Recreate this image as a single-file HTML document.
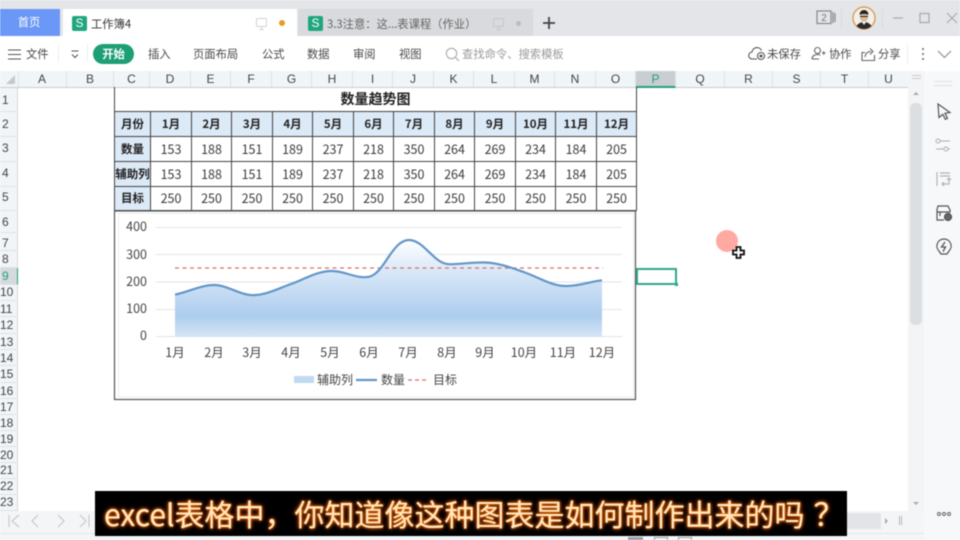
<!DOCTYPE html>
<html lang="zh"><head><meta charset="utf-8"><title>工作簿4</title>
<style>
html,body{margin:0;padding:0;background:#fff}
#p{position:relative;width:960px;height:540px;overflow:hidden;background:#fff;font-family:"Liberation Sans","Noto Sans CJK SC",sans-serif;color:#444;filter:blur(.4px)}
.a{position:absolute}
.t{position:absolute;white-space:nowrap;font-size:11.3px;line-height:16px;font-family:"Noto Sans CJK SC",sans-serif;color:#4a4a4a}
.ch{position:absolute;top:71px;height:16px;line-height:16px;text-align:center;font-size:12px;color:#444;border-right:1px solid #dfe3e6;box-sizing:border-box}
.rh{position:absolute;left:0;width:18px;text-align:left;padding-left:2px;box-sizing:border-box;font-size:12px;color:#444;border-bottom:1px solid #dfe3e6;border-right:1px solid #d5d8db;background:#f1f5f8}
table{position:absolute;left:114px;top:87px;border-collapse:collapse;table-layout:fixed;width:522px;font-family:"Noto Sans CJK SC",sans-serif}
td{border:1px solid #444;padding:0;text-align:center;font-size:12.5px;color:#3a3a3a;overflow:hidden;white-space:nowrap;line-height:14px}
td.h{background:#dce9f7;font-weight:700;font-size:11.5px;color:#222}
#sub{position:absolute;left:95px;top:491px;width:752px;height:45px;background:#000}
#sub>span{position:absolute;left:9px;top:1px;white-space:nowrap;font:400 30px/42px "Noto Sans CJK SC",sans-serif;color:#ffe9c4;text-shadow:0 0 1.500px #ff8a1a,0 0 3px #f06a00,0 0 5px #d84a00}
#sub i{font-style:normal;position:relative;left:9px;font-size:31px}
</style></head><body><div id="p">

<!-- tab bar -->
<div class="a" style="left:0;top:0;width:960px;height:36px;background:#e3e5e8"></div>
<div class="a" style="left:0;top:9px;width:60px;height:27px;background:#6b98f7;color:#fff;font:11.3px/27px 'Noto Sans CJK SC',sans-serif;text-align:center;padding-right:2px;box-sizing:border-box">首页</div>
<div class="a" style="left:63px;top:9px;width:234px;height:27px;background:#fff"></div>
<div class="a" style="left:298px;top:9px;width:235px;height:27px;background:#d9dadd"></div>
<div class="a" style="left:72px;top:16px;width:15px;height:15px;background:#1fa67d;border-radius:2px;color:#fff;font:400 12px/15px 'Liberation Sans',sans-serif;text-align:center">S</div>
<div class="t" style="left:91px;top:16px;color:#333">工作簿4</div>
<svg class="a" style="left:255px;top:17px" width="14" height="14" viewBox="0 0 14 14" fill="none" stroke="#d2d4d6"><rect x="1.5" y="1.5" width="10" height="8" rx="1"/><path d="M6.5 9.5v3M4 12.5h5"/></svg>
<div class="a" style="left:279px;top:20px;width:6px;height:6px;border-radius:50%;background:#ec9b1e"></div>
<div class="a" style="left:308px;top:16px;width:15px;height:15px;background:#1fa67d;border-radius:2px;color:#fff;font:400 12px/15px 'Liberation Sans',sans-serif;text-align:center">S</div>
<div class="t" style="left:327px;top:16px;color:#666">3.3注意：这...表课程（作业）</div>
<svg class="a" style="left:492px;top:17px" width="14" height="14" viewBox="0 0 14 14" fill="none" stroke="#c6c8ca"><rect x="1.5" y="1.5" width="10" height="8" rx="1"/><path d="M6.5 9.5v3M4 12.5h5"/></svg>
<div class="a" style="left:516px;top:21px;width:5px;height:5px;border-radius:50%;background:#bbbdc0"></div>
<svg class="a" style="left:543px;top:17px" width="12" height="12" viewBox="0 0 12 12" stroke="#444" stroke-width="1.800"><path d="M6 0v12M0 6h12"/></svg>

<svg class="a" style="left:816px;top:10px" width="22" height="15" viewBox="0 0 22 15" fill="none" stroke="#888" stroke-width="1.200"><rect x="1" y="1" width="14" height="12.5"/><path d="M17 2v11M19 3v9"/><text x="8" y="11" font-size="10" text-anchor="middle" fill="#777" stroke="none" font-family="Liberation Sans">2</text></svg>
<svg class="a" style="left:852px;top:6px" width="24" height="24" viewBox="0 0 24 24"><circle cx="12" cy="12" r="11" fill="#f4f0ea" stroke="#d6a35c" stroke-width="1.500"/><path d="M4.500 20c2-3 5-4 7.500-4s5.500 1 7.500 4a11 11 0 0 1-15 0z" fill="#2b2b2b"/><path d="M10 16l2 3 2-3z" fill="#fff"/><ellipse cx="12" cy="11" rx="4" ry="5" fill="#e0b99a"/><path d="M7.500 9c0-3.500 2.500-5 4.500-5s4.500 1.500 4.500 5c-2-1.500-7-1.500-9 0z" fill="#222"/><path d="M8 10.500h8" stroke="#222"/></svg>
<div class="a" style="left:841px;top:8px;width:1px;height:20px;background:#d8dadd"></div>
<div class="a" style="left:882px;top:8px;width:1px;height:20px;background:#d8dadd"></div>
<svg class="a" style="left:892px;top:10px" width="68" height="16" viewBox="0 0 68 16" fill="none" stroke="#a9acb0" stroke-width="1.200"><path d="M1 8h10"/><rect x="28" y="3.500" width="9" height="9" stroke-width="1.300"/><path d="M55 3l10 10M65 3L55 13"/></svg>

<!-- toolbar -->
<div class="a" style="left:0;top:36px;width:960px;height:35px;background:#fff"></div>
<svg class="a" style="left:8px;top:49px" width="13" height="11" viewBox="0 0 13 11" stroke="#555" stroke-width="1.100"><path d="M0 1h13M0 5.500h13M0 10h13"/></svg>
<div class="t" style="left:26px;top:46px">文件</div>
<div class="a" style="left:58px;top:44px;width:1px;height:18px;background:#eceef0"></div>
<svg class="a" style="left:71px;top:50px" width="8" height="9" viewBox="0 0 8 9" fill="none" stroke="#555" stroke-width="1.100"><path d="M.5 1h7M1 4.500l3 3 3-3"/></svg>
<div class="a" style="left:87px;top:44px;width:1px;height:18px;background:#eceef0"></div>
<div class="a" style="left:93px;top:44px;width:41px;height:20px;border-radius:10px;background:#1d9f76;color:#fff;font:700 11.3px/20px 'Noto Sans CJK SC',sans-serif;text-align:center">开始</div>
<div class="t" style="left:148px;top:46px">插入</div>
<div class="t" style="left:193px;top:46px">页面布局</div>
<div class="t" style="left:262px;top:46px">公式</div>
<div class="t" style="left:307px;top:46px">数据</div>
<div class="t" style="left:353px;top:46px">审阅</div>
<div class="t" style="left:399px;top:46px">视图</div>
<svg class="a" style="left:445px;top:47px" width="15" height="15" viewBox="0 0 15 15" fill="none" stroke="#aaa" stroke-width="1.100"><circle cx="6.500" cy="6.500" r="5.200"/><path d="M10.500 10.500l3.500 3.500"/></svg>
<div class="t" style="left:462px;top:46px;color:#9a9a9a">查找命令、搜索模板</div>

<svg class="a" style="left:748px;top:46px" width="18" height="15" viewBox="0 0 18 15" fill="none" stroke="#555" stroke-width="1.100"><path d="M9 13H4.500a3.500 3.500 0 0 1-.5-7 5 5 0 0 1 9.500-1.500"/><circle cx="13" cy="10" r="3.500"/><circle cx="13" cy="10" r="1" fill="#555"/></svg>
<div class="t" style="left:767px;top:46px">未保存</div>
<svg class="a" style="left:811px;top:46px" width="15" height="15" viewBox="0 0 15 15" fill="none" stroke="#666" stroke-width="1.100"><circle cx="6.500" cy="4.500" r="3"/><path d="M1 13c0-3 2.500-4.500 5.500-4.500 1 0 2 .2 2.800.6M1 13h7M11 7h3.500M12.700 5.300v3.400"/></svg>
<div class="t" style="left:829px;top:46px">协作</div>
<svg class="a" style="left:861px;top:47px" width="15" height="14" viewBox="0 0 15 14" fill="none" stroke="#666" stroke-width="1.100"><path d="M4 5.500H1v8h12.500V8"/><path d="M4 10c.5-4 3-5.500 6-5.500M9 1.500l3 3-3 3"/></svg>
<div class="t" style="left:878px;top:46px">分享</div>
<div class="a" style="left:907px;top:44px;width:1px;height:20px;background:#eceef0"></div>
<svg class="a" style="left:921px;top:47px" width="4" height="14" viewBox="0 0 4 14" fill="#666"><circle cx="2" cy="2" r="1"/><circle cx="2" cy="7" r="1"/><circle cx="2" cy="12" r="1"/></svg>
<svg class="a" style="left:937px;top:50px" width="15" height="9" viewBox="0 0 15 9" fill="none" stroke="#888" stroke-width="1.100"><path d="M1 1l6.500 6.500L14 1"/></svg>

<!-- column headers -->
<div class="a" style="left:0;top:71px;width:908px;height:16px;background:#f0f5f8;border-bottom:1px solid #c9cdd0;box-sizing:content-box"></div>
<div class="a" style="left:6px;top:75px;width:0;height:0;border-left:9px solid transparent;border-bottom:9px solid #c6c9cc"></div>
<div class="a" style="left:18px;top:71px;width:1px;height:16px;background:#dfe3e6"></div>
<div class="ch" style="left:18px;width:49px">A</div>
<div class="ch" style="left:67px;width:47px">B</div>
<div class="ch" style="left:114px;width:36px">C</div>
<div class="ch" style="left:150px;width:41px">D</div>
<div class="ch" style="left:191px;width:40px">E</div>
<div class="ch" style="left:231px;width:41px">F</div>
<div class="ch" style="left:272px;width:40px">G</div>
<div class="ch" style="left:312px;width:41px">H</div>
<div class="ch" style="left:353px;width:40px">I</div>
<div class="ch" style="left:393px;width:41px">J</div>
<div class="ch" style="left:434px;width:40px">K</div>
<div class="ch" style="left:474px;width:41px">L</div>
<div class="ch" style="left:515px;width:40px">M</div>
<div class="ch" style="left:555px;width:41px">N</div>
<div class="ch" style="left:596px;width:40px">O</div>
<div class="ch" style="left:636px;width:40px;background:#c9ced3;color:#2a9d7c;border-bottom:2px solid #27a07d;height:17px">P</div>
<div class="ch" style="left:676px;width:49px">Q</div>
<div class="ch" style="left:725px;width:48px">R</div>
<div class="ch" style="left:773px;width:48px">S</div>
<div class="ch" style="left:821px;width:48px">T</div>
<div class="ch" style="left:869px;width:39px;border-right:0">U</div>

<!-- row headers -->
<div class="rh" style="top:88px;height:24px;line-height:24px">1</div>
<div class="rh" style="top:112px;height:25px;line-height:25px">2</div>
<div class="rh" style="top:137px;height:25px;line-height:23px">3</div>
<div class="rh" style="top:162px;height:25px;line-height:23px">4</div>
<div class="rh" style="top:187px;height:24px;line-height:21px">5</div>
<div class="rh" style="top:211px;height:22px;line-height:22px">6</div>
<div class="rh" style="top:233px;height:18px;line-height:20px">7</div>
<div class="rh" style="top:251px;height:17px;line-height:17px">8</div>
<div class="rh" style="top:268px;height:17px;line-height:16px;background:#d5dade;color:#2a9d7c;border-right:1px solid #27a07d">9</div>
<div class="rh" style="top:285px;height:16px;line-height:15px;padding-left:0">10</div>
<div class="rh" style="top:301px;height:16px;line-height:16px;padding-left:0">11</div>
<div class="rh" style="top:317px;height:17px;line-height:17px;padding-left:0">12</div>
<div class="rh" style="top:334px;height:16px;line-height:16px;padding-left:0">13</div>
<div class="rh" style="top:350px;height:16px;line-height:16px;padding-left:0">14</div>
<div class="rh" style="top:366px;height:17px;line-height:17px;padding-left:0">15</div>
<div class="rh" style="top:383px;height:16px;line-height:16px;padding-left:0">16</div>
<div class="rh" style="top:399px;height:16px;line-height:16px;padding-left:0">17</div>
<div class="rh" style="top:415px;height:16px;line-height:16px;padding-left:0">18</div>
<div class="rh" style="top:431px;height:16px;line-height:16px;padding-left:0">19</div>
<div class="rh" style="top:447px;height:16px;line-height:16px;padding-left:0">20</div>
<div class="rh" style="top:463px;height:16px;line-height:15px;padding-left:0">21</div>
<div class="rh" style="top:479px;height:16px;line-height:15px;padding-left:0">22</div>
<div class="rh" style="top:495px;height:16px;line-height:15px;padding-left:0">23</div>

<!-- data table -->
<table>
<colgroup><col style="width:36px"><col style="width:41px"><col style="width:40px"><col style="width:41px"><col style="width:40px"><col style="width:41px"><col style="width:40px"><col style="width:41px"><col style="width:40px"><col style="width:41px"><col style="width:40px"><col style="width:41px"><col style="width:40px"></colgroup>
<tr style="height:24px"><td colspan="13" style="border-top:0;font-weight:700;font-size:14px;color:#222">数量趋势图</td></tr>
<tr style="height:25px"><td class="h">月份</td><td class="h">1月</td><td class="h">2月</td><td class="h">3月</td><td class="h">4月</td><td class="h">5月</td><td class="h">6月</td><td class="h">7月</td><td class="h">8月</td><td class="h">9月</td><td class="h">10月</td><td class="h">11月</td><td class="h">12月</td></tr>
<tr style="height:25px"><td class="h">数量</td><td>153</td><td>188</td><td>151</td><td>189</td><td>237</td><td>218</td><td>350</td><td>264</td><td>269</td><td>234</td><td>184</td><td>205</td></tr>
<tr style="height:25px"><td class="h">辅助列</td><td>153</td><td>188</td><td>151</td><td>189</td><td>237</td><td>218</td><td>350</td><td>264</td><td>269</td><td>234</td><td>184</td><td>205</td></tr>
<tr style="height:24px"><td class="h">目标</td><td>250</td><td>250</td><td>250</td><td>250</td><td>250</td><td>250</td><td>250</td><td>250</td><td>250</td><td>250</td><td>250</td><td>250</td></tr>
</table>

<!-- chart -->
<svg class="a" style="left:0;top:0" width="960" height="540" viewBox="0 0 960 540">
<defs><linearGradient id="g" x1="0" y1="240" x2="0" y2="337" gradientUnits="userSpaceOnUse"><stop offset="0" stop-color="#fff"/><stop offset=".3" stop-color="#dbe9f8"/><stop offset=".78" stop-color="#adcdee"/><stop offset="1" stop-color="#d6e6f6"/></linearGradient></defs>
<rect x="114.500" y="211" width="521" height="188.500" fill="#fff" stroke="#555" stroke-width="1.200"/>
<rect x="118.500" y="213.500" width="515" height="183.500" fill="none" stroke="#eceef0"/>
<path d="M156 227.500h466M156 254.500h466M156 282h466M156 309.500h466M156 336.500h466" stroke="#e2e4e6" stroke-width="1"/>
<path d="M175 294.600C188 292,201 285,214 285C227 285,240 295.100,253 295.100C266 295.100,278 288.600,291 284C304 279.500,317 271,332 271C345 271,356 279,369 276.800C384 274,392 240,409 240C424 240,434 264,449 264.200C462 264.300,472 262,485 262.500C500 263,512 268,525 272.500C540 278,552 286,566 286C580 286,590 281.500,602 280.300V337H175Z" fill="url(#g)"/>
<path d="M175 268h428" stroke="#d86f6e" stroke-width="1.300" stroke-dasharray="4 3.500" fill="none"/>
<path d="M175 294.600C188 292,201 285,214 285C227 285,240 295.100,253 295.100C266 295.100,278 288.600,291 284C304 279.500,317 271,332 271C345 271,356 279,369 276.800C384 274,392 240,409 240C424 240,434 264,449 264.200C462 264.300,472 262,485 262.500C500 263,512 268,525 272.500C540 278,552 286,566 286C580 286,590 281.500,602 280.300" fill="none" stroke="#6396c9" stroke-width="2.200"/>
<rect x="294" y="376" width="20" height="7" fill="#c3d9f1"/>
<path d="M356 380h21" stroke="#6396c9" stroke-width="2.200"/>
<path d="M408 380h21" stroke="#d86f6e" stroke-width="1.300" stroke-dasharray="4 3"/>
<g font-family="Noto Sans CJK SC,sans-serif" font-size="12.5" fill="#444">
<g text-anchor="end"><text x="147" y="231">400</text><text x="147" y="259">300</text><text x="147" y="286">200</text><text x="147" y="313">100</text><text x="147" y="340">0</text></g>
<g text-anchor="middle"><text x="175" y="357">1月</text><text x="214" y="357">2月</text><text x="252" y="357">3月</text><text x="291" y="357">4月</text><text x="330" y="357">5月</text><text x="369" y="357">6月</text><text x="408" y="357">7月</text><text x="447" y="357">8月</text><text x="485" y="357">9月</text><text x="524" y="357">10月</text><text x="563" y="357">11月</text><text x="602" y="357">12月</text></g>
<g font-size="12"><text x="317" y="384">辅助列</text><text x="381" y="384">数量</text><text x="433" y="384">目标</text></g>
</g>
</svg>

<!-- selection -->
<div class="a" style="left:636px;top:268px;width:41px;height:17px;border:2px solid #2fa888;box-sizing:border-box"></div>
<div class="a" style="left:675px;top:283px;width:3px;height:3px;background:#2fa888"></div>
<!-- pointer -->
<div class="a" style="left:716px;top:230px;width:22px;height:22px;border-radius:50%;background:#ffa9a3"></div>
<svg class="a" style="left:732px;top:246px" width="13" height="13" viewBox="0 0 13 13"><path d="M4.500 1h4v3.500H12v4H8.500V12h-4V8.500H1v-4h3.500z" fill="#fff" stroke="#111" stroke-width="1.800"/></svg>

<!-- vertical scrollbar and side panel -->
<div class="a" style="left:908px;top:71px;width:16px;height:441px;background:#f3f4f6"></div>
<div class="a" style="left:910px;top:103px;width:12px;height:222px;background:#dcdfe2;border-radius:5px"></div>
<div class="a" style="left:912px;top:75px;width:9px;height:1px;background:#c6c9cc"></div>
<div class="a" style="left:912px;top:78px;width:9px;height:1px;background:#c6c9cc"></div>
<div class="a" style="left:913px;top:92px;width:0;height:0;border-left:3px solid transparent;border-right:3px solid transparent;border-bottom:3px solid #a8abaf"></div>
<div class="a" style="left:913px;top:502px;width:0;height:0;border-left:3px solid transparent;border-right:3px solid transparent;border-top:3px solid #a8abaf"></div>
<div class="a" style="left:924px;top:71px;width:36px;height:469px;background:#f6f8fa"></div>
<div class="a" style="left:934px;top:81px;width:18px;height:1px;background:#dfe1e3"></div>
<div class="a" style="left:934px;top:85px;width:18px;height:1px;background:#dfe1e3"></div>
<svg class="a" style="left:934px;top:102px" width="20" height="20" viewBox="0 0 20 20" fill="none" stroke="#555" stroke-width="1.200"><path d="M4 2l12 8.500-5 .8 2.500 5-2.200 1-2.500-5L5 15.500z"/></svg>
<svg class="a" style="left:934px;top:136px" width="20" height="18" viewBox="0 0 20 18" fill="none" stroke="#aab0b4" stroke-width="1"><circle cx="4" cy="5" r="2"/><path d="M6 5h10"/><circle cx="12" cy="13" r="2"/><path d="M2 13h8M14 13h2"/></svg>
<svg class="a" style="left:935px;top:170px" width="18" height="18" viewBox="0 0 18 18" fill="none" stroke="#b0b5b9" stroke-width="1.200"><path d="M2 2v14M5 3h10M5 6h10"/><path d="M7 14h7v-6M12 10l2-2 2 2M9 12l-2 2 2 2"/></svg>
<svg class="a" style="left:935px;top:205px" width="18" height="17" viewBox="0 0 18 17" fill="none" stroke="#555" stroke-width="1.200"><path d="M3 1h10l2 4v2H2V5zM2 7v8h7"/><circle cx="13" cy="12" r="3.500" fill="#666"/><path d="M5 7v4"/></svg>
<svg class="a" style="left:935px;top:238px" width="18" height="18" viewBox="0 0 18 18" fill="none" stroke="#555" stroke-width="1.200"><path d="M9 1a7 7 0 0 1 5 12l-2 3H6l-2-3A7 7 0 0 1 9 1z" stroke-linejoin="round"/><path d="M10 4L6.500 9h4L8 13.500" stroke-width="1.300"/></svg>
<svg class="a" style="left:936px;top:511px" width="16" height="6" viewBox="0 0 16 6" fill="none" stroke="#666"><circle cx="3" cy="3" r="1.500"/><circle cx="8" cy="3" r="1.500"/><circle cx="13" cy="3" r="1.500"/></svg>

<!-- bottom bars -->
<div class="a" style="left:0;top:511px;width:924px;height:22px;background:#f4f5f7"></div>
<div class="a" style="left:847px;top:513px;width:34px;height:16px;background:#e2e4e7"></div>
<svg class="a" style="left:6px;top:514px" width="84" height="14" viewBox="0 0 84 14" fill="none" stroke="#c6cacd" stroke-width="1.200"><path d="M3 1v12M13 1L6 7l7 6M32 1l-6 6 6 6M52 1l6 6-6 6M74 1l6 6-6 6M83 1v12"/></svg>
<div class="a" style="left:885px;top:518px;width:0;height:0;border-top:3px solid transparent;border-bottom:3px solid transparent;border-left:3px solid #a8abaf"></div>
<div class="a" style="left:899px;top:516px;width:1px;height:9px;background:#b5b8bb"></div>
<div class="a" style="left:901px;top:516px;width:1px;height:9px;background:#b5b8bb"></div>
<div class="a" style="left:0;top:533px;width:924px;height:7px;background:#f4f5f7;border-top:1px solid #e3e5e7;box-sizing:border-box"></div>
<div class="a" style="left:628px;top:537px;width:15px;height:3px;background:#9b9ea2"></div>
<div class="a" style="left:654px;top:537px;width:14px;height:3px;border:1px solid #9b9ea2;border-bottom:0;box-sizing:border-box"></div>
<div class="a" style="left:678px;top:537px;width:14px;height:3px;border:1px solid #9b9ea2;border-bottom:0;box-sizing:border-box"></div>

<!-- subtitle -->
<div id="sub"><span>excel表格中，你知道像这种图表是如何制作出来的吗<i>？</i></span></div>
</div></body></html>
